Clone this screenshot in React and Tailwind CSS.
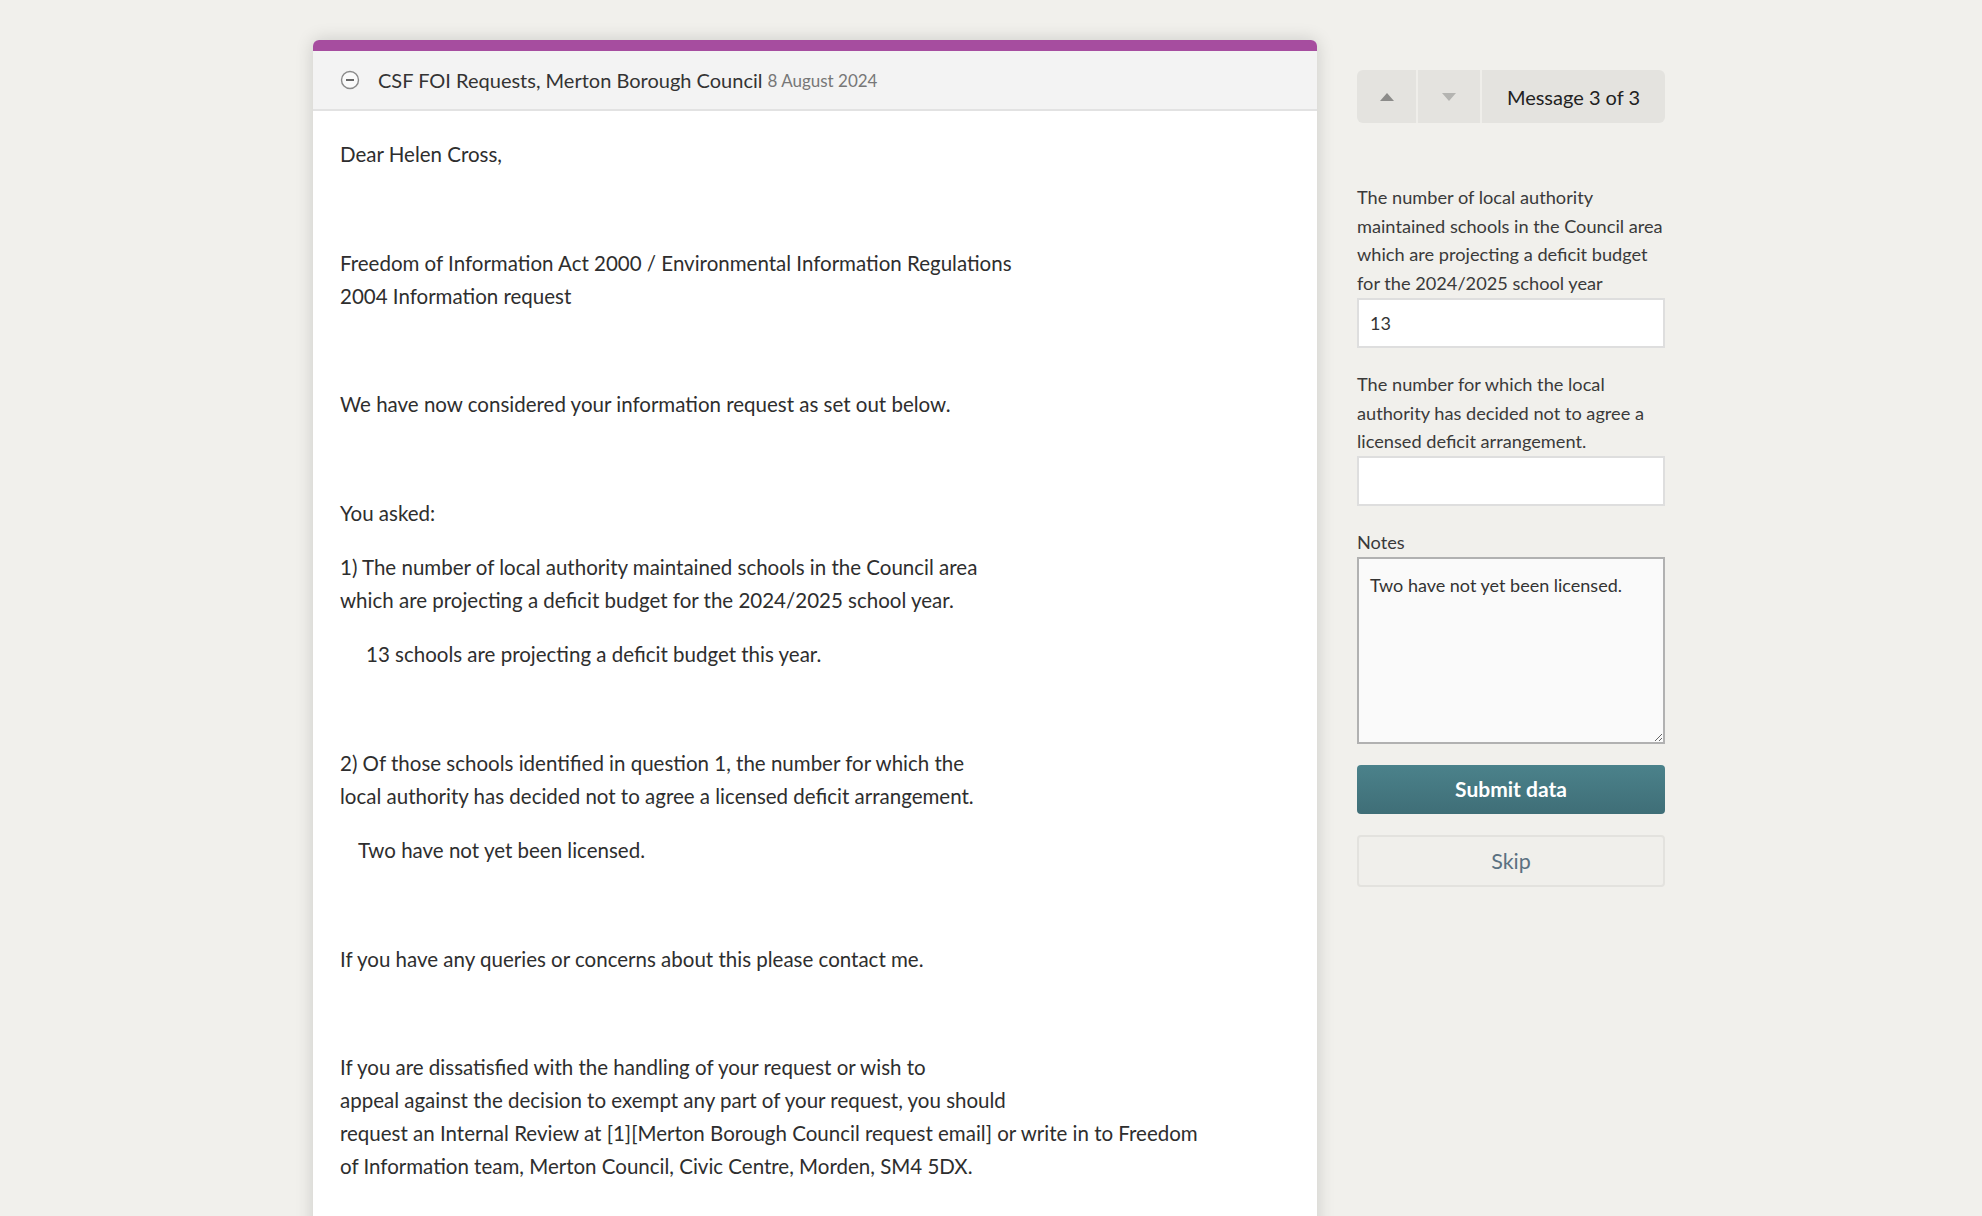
import React from 'react'

const Para = ({ children, className = '' }) => (
    <p className={`mb-[21.3px] ${className}`}>{children}</p>
)

const Blank = () => <p className="mb-[21.3px] h-[33px]">&nbsp;</p>

const MessageCard = () => (
    <div className="w-[1004px] shrink-0 bg-white rounded-t-[6px] shadow-[0_0_18px_rgba(0,0,0,0.16)] min-h-[1200px]">
        <div className="h-[11px] bg-[#a64d9f] rounded-t-[6px]" />
        <div className="h-[60px] bg-[#f3f3f3] border-b-2 border-[#e2e2e2] flex items-center px-[27px]">
            <svg width="20" height="20" viewBox="0 0 20 20" className="mr-[18px] shrink-0">
                <circle cx="10" cy="10" r="8.5" fill="#fafafa" stroke="#8a8a8a" strokeWidth="1.4" />
                <line x1="6" y1="10" x2="14" y2="10" stroke="#666" strokeWidth="2" />
            </svg>
            <span className="text-[20px] text-[#333]">CSF FOI Requests, Merton Borough Council</span>
            <span className="text-[17px] text-[#777] ml-[5px] mt-[2px]">8 August 2024</span>
        </div>
        <div className="px-[27px] pt-[27px] text-[20.5px] leading-[33px] text-[#2e2e2e]">
            <Para>Dear Helen Cross,</Para>
            <Blank />
            <Para>
                Freedom of Information Act 2000 / Environmental Information Regulations<br />
                2004 Information request
            </Para>
            <Blank />
            <Para>We have now considered your information request as set out below.</Para>
            <Blank />
            <Para>You asked:</Para>
            <Para>
                1) The number of local authority maintained schools in the Council area<br />
                which are projecting a deficit budget for the 2024/2025 school year.
            </Para>
            <Para className="pl-[26px]">13 schools are projecting a deficit budget this year.</Para>
            <Blank />
            <Para>
                2) Of those schools identified in question 1, the number for which the<br />
                local authority has decided not to agree a licensed deficit arrangement.
            </Para>
            <Para className="pl-[18px]">Two have not yet been licensed.</Para>
            <Blank />
            <Para>If you have any queries or concerns about this please contact me.</Para>
            <Blank />
            <Para>
                If you are dissatisfied with the handling of your request or wish to<br />
                appeal against the decision to exempt any part of your request, you should<br />
                request an Internal Review at [1][Merton Borough Council request email] or write in to Freedom<br />
                of Information team, Merton Council, Civic Centre, Morden, SM4 5DX.
            </Para>
        </div>
    </div>
)

const Sidebar = () => (
    <div className="w-[308px] shrink-0 pt-[30px] text-[#333]">
        <div className="h-[53px] flex rounded-[6px] bg-[#e4e3df] overflow-hidden">
            <button className="w-[61px] flex items-center justify-center border-r-2 border-[#efeeea]">
                <svg width="14" height="8" viewBox="0 0 14 8"><path d="M0 8 L7 0 L14 8 Z" fill="#8c8c8a" /></svg>
            </button>
            <button className="w-[64px] flex items-center justify-center border-r-2 border-[#efeeea]">
                <svg width="14" height="8" viewBox="0 0 14 8"><path d="M0 0 L14 0 L7 8 Z" fill="#b4b4b1" /></svg>
            </button>
            <div className="flex-1 flex items-center justify-center text-[20px] text-[#222]">Message 3 of 3</div>
        </div>

        <div className="mt-[60px]">
            <label className="block whitespace-nowrap text-[18.2px] leading-[28.7px] text-[#3a3a3a]">
                The number of local authority<br />
                maintained schools in the Council area<br />
                which are projecting a deficit budget<br />
                for the 2024/2025 school year
            </label>
            <input
                readOnly
                value="13"
                className="w-full h-[50px] bg-white border-2 border-[#dedede] px-[11px] text-[18px] text-[#333] outline-none"
            />
        </div>

        <div className="mt-[22px]">
            <label className="block whitespace-nowrap text-[18.2px] leading-[28.7px] text-[#3a3a3a]">
                The number for which the local<br />
                authority has decided not to agree a<br />
                licensed deficit arrangement.
            </label>
            <input
                readOnly
                value=""
                className="w-full h-[50px] bg-white border-2 border-[#dedede] px-[11px] text-[18px] outline-none"
            />
        </div>

        <div className="mt-[22px]">
            <label className="block text-[18.2px] leading-[28.7px] text-[#3a3a3a]">Notes</label>
            <textarea
                readOnly
                value="Two have not yet been licensed."
                className="block w-full h-[187px] bg-[#fafafa] border-2 border-[#b1b1b1] px-[11px] py-[13px] text-[18px] leading-[27px] text-[#333] outline-none"
            />
        </div>

        <button className="mt-[21px] w-full h-[49px] rounded-[4px] bg-gradient-to-b from-[#4b828b] to-[#3f6e77] text-white text-[21px] font-bold">
            Submit data
        </button>
        <button className="mt-[21px] w-full h-[52px] rounded-[4px] bg-[#f0efeb] border-2 border-[#e3e2de] text-[#5b7181] text-[21.5px]">
            Skip
        </button>
    </div>
)

export default function App() {
    return (
        <div className="min-h-screen h-[1216px] overflow-hidden bg-[#f1f0ec]" style={{ fontFamily: 'Lato, "Noto Sans", sans-serif' }}>
            <div className="w-[1356px] mx-auto pr-[4px] pt-[40px] flex gap-[40px]">
                <MessageCard />
                <Sidebar />
            </div>
        </div>
    )
}
